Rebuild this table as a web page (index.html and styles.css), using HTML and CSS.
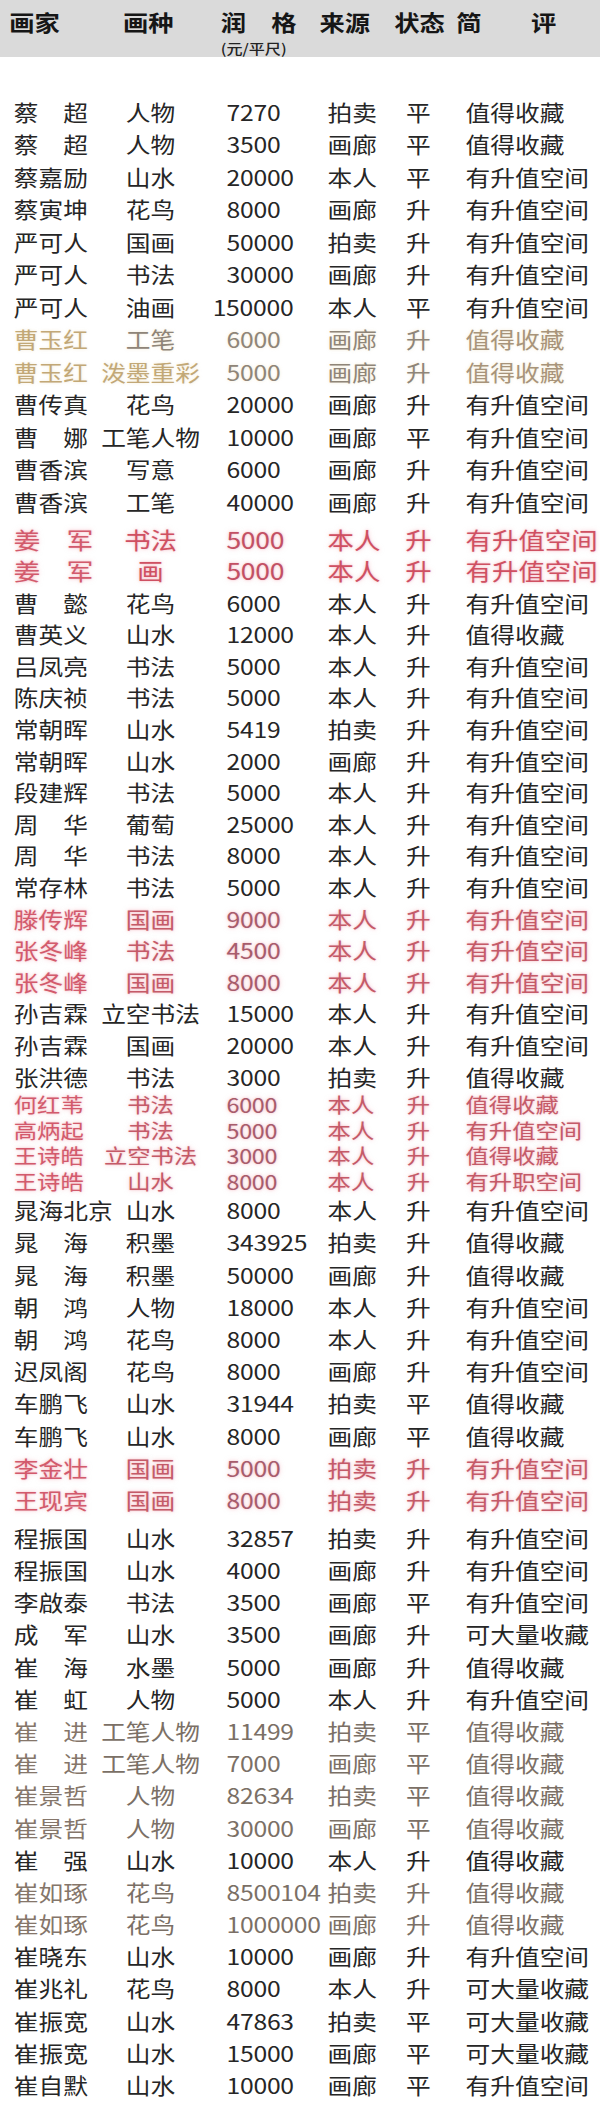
FILE: index.html
```html
<!DOCTYPE html>
<html lang="zh-CN">
<head>
<meta charset="utf-8">
<title>画家润格表</title>
<link rel="stylesheet" href="styles.css">
</head>
<body>
<div class="sheet">
  <div class="head">
    <div class="hc">画家</div>
    <div class="hc">画种</div>
    <div class="hc hprice"><span>润　格</span><span class="unit">(元/平尺)</span></div>
    <div class="hc">来源</div>
    <div class="hc">状态</div>
    <div class="hc">简</div>
    <div class="hc">评</div>
  </div>

  <div class="rows">
    <div class="grp g1">
      <div class="row"><span class="name">蔡　超</span><span class="type">人物</span><span class="price">7270</span><span class="src">拍卖</span><span class="st">平</span><span class="cm">值得收藏</span></div>
      <div class="row"><span class="name">蔡　超</span><span class="type">人物</span><span class="price">3500</span><span class="src">画廊</span><span class="st">平</span><span class="cm">值得收藏</span></div>
      <div class="row"><span class="name">蔡嘉励</span><span class="type">山水</span><span class="price">20000</span><span class="src">本人</span><span class="st">平</span><span class="cm">有升值空间</span></div>
      <div class="row"><span class="name">蔡寅坤</span><span class="type">花鸟</span><span class="price">8000</span><span class="src">画廊</span><span class="st">升</span><span class="cm">有升值空间</span></div>
      <div class="row"><span class="name">严可人</span><span class="type">国画</span><span class="price">50000</span><span class="src">拍卖</span><span class="st">升</span><span class="cm">有升值空间</span></div>
      <div class="row"><span class="name">严可人</span><span class="type">书法</span><span class="price">30000</span><span class="src">画廊</span><span class="st">升</span><span class="cm">有升值空间</span></div>
      <div class="row"><span class="name">严可人</span><span class="type">油画</span><span class="price wide-num">150000</span><span class="src">本人</span><span class="st">平</span><span class="cm">有升值空间</span></div>
      <div class="row gold"><span class="name">曹玉红</span><span class="type">工笔</span><span class="price">6000</span><span class="src">画廊</span><span class="st">升</span><span class="cm">值得收藏</span></div>
      <div class="row gold"><span class="name">曹玉红</span><span class="type tan">泼墨重彩</span><span class="price">5000</span><span class="src">画廊</span><span class="st">升</span><span class="cm">值得收藏</span></div>
      <div class="row"><span class="name">曹传真</span><span class="type">花鸟</span><span class="price">20000</span><span class="src">画廊</span><span class="st">升</span><span class="cm">有升值空间</span></div>
      <div class="row"><span class="name">曹　娜</span><span class="type">工笔人物</span><span class="price">10000</span><span class="src">画廊</span><span class="st">平</span><span class="cm">有升值空间</span></div>
      <div class="row"><span class="name">曹香滨</span><span class="type">写意</span><span class="price">6000</span><span class="src">画廊</span><span class="st">升</span><span class="cm">有升值空间</span></div>
      <div class="row"><span class="name">曹香滨</span><span class="type">工笔</span><span class="price">40000</span><span class="src">画廊</span><span class="st">升</span><span class="cm">有升值空间</span></div>
    </div>

    <div class="grp g2">
      <div class="row red strong"><span class="name">姜　军</span><span class="type">书法</span><span class="price">5000</span><span class="src">本人</span><span class="st">升</span><span class="cm">有升值空间</span></div>
      <div class="row red strong"><span class="name">姜　军</span><span class="type">画</span><span class="price">5000</span><span class="src">本人</span><span class="st">升</span><span class="cm">有升值空间</span></div>
      <div class="row"><span class="name">曹　懿</span><span class="type">花鸟</span><span class="price">6000</span><span class="src">本人</span><span class="st">升</span><span class="cm">有升值空间</span></div>
      <div class="row"><span class="name">曹英义</span><span class="type">山水</span><span class="price">12000</span><span class="src">本人</span><span class="st">升</span><span class="cm">值得收藏</span></div>
      <div class="row"><span class="name">吕凤亮</span><span class="type">书法</span><span class="price">5000</span><span class="src">本人</span><span class="st">升</span><span class="cm">有升值空间</span></div>
      <div class="row"><span class="name">陈庆祯</span><span class="type">书法</span><span class="price">5000</span><span class="src">本人</span><span class="st">升</span><span class="cm">有升值空间</span></div>
      <div class="row"><span class="name">常朝晖</span><span class="type">山水</span><span class="price">5419</span><span class="src">拍卖</span><span class="st">升</span><span class="cm">有升值空间</span></div>
      <div class="row"><span class="name">常朝晖</span><span class="type">山水</span><span class="price">2000</span><span class="src">画廊</span><span class="st">升</span><span class="cm">有升值空间</span></div>
      <div class="row"><span class="name">段建辉</span><span class="type">书法</span><span class="price">5000</span><span class="src">本人</span><span class="st">升</span><span class="cm">有升值空间</span></div>
      <div class="row"><span class="name">周　华</span><span class="type">葡萄</span><span class="price">25000</span><span class="src">本人</span><span class="st">升</span><span class="cm">有升值空间</span></div>
      <div class="row"><span class="name">周　华</span><span class="type">书法</span><span class="price">8000</span><span class="src">本人</span><span class="st">升</span><span class="cm">有升值空间</span></div>
      <div class="row"><span class="name">常存林</span><span class="type">书法</span><span class="price">5000</span><span class="src">本人</span><span class="st">升</span><span class="cm">有升值空间</span></div>
      <div class="row red"><span class="name">滕传辉</span><span class="type">国画</span><span class="price">9000</span><span class="src">本人</span><span class="st">升</span><span class="cm">有升值空间</span></div>
      <div class="row red"><span class="name">张冬峰</span><span class="type">书法</span><span class="price">4500</span><span class="src">本人</span><span class="st">升</span><span class="cm">有升值空间</span></div>
      <div class="row red"><span class="name">张冬峰</span><span class="type">国画</span><span class="price">8000</span><span class="src">本人</span><span class="st">升</span><span class="cm">有升值空间</span></div>
      <div class="row"><span class="name">孙吉霖</span><span class="type">立空书法</span><span class="price">15000</span><span class="src">本人</span><span class="st">升</span><span class="cm">有升值空间</span></div>
      <div class="row"><span class="name">孙吉霖</span><span class="type">国画</span><span class="price">20000</span><span class="src">本人</span><span class="st">升</span><span class="cm">有升值空间</span></div>
      <div class="row"><span class="name">张洪德</span><span class="type">书法</span><span class="price">3000</span><span class="src">拍卖</span><span class="st">升</span><span class="cm">值得收藏</span></div>
    </div>

    <div class="grp g3">
      <div class="row red"><span class="name">何红苇</span><span class="type">书法</span><span class="price">6000</span><span class="src">本人</span><span class="st">升</span><span class="cm">值得收藏</span></div>
      <div class="row red"><span class="name">高炳起</span><span class="type">书法</span><span class="price">5000</span><span class="src">本人</span><span class="st">升</span><span class="cm">有升值空间</span></div>
      <div class="row red"><span class="name">王诗皓</span><span class="type">立空书法</span><span class="price">3000</span><span class="src">本人</span><span class="st">升</span><span class="cm">值得收藏</span></div>
      <div class="row red"><span class="name">王诗皓</span><span class="type">山水</span><span class="price">8000</span><span class="src">本人</span><span class="st">升</span><span class="cm">有升职空间</span></div>
    </div>

    <div class="grp g4">
      <div class="row"><span class="name">晁海北京</span><span class="type">山水</span><span class="price">8000</span><span class="src">本人</span><span class="st">升</span><span class="cm">有升值空间</span></div>
      <div class="row"><span class="name">晁　海</span><span class="type">积墨</span><span class="price">343925</span><span class="src">拍卖</span><span class="st">升</span><span class="cm">值得收藏</span></div>
      <div class="row"><span class="name">晁　海</span><span class="type">积墨</span><span class="price">50000</span><span class="src">画廊</span><span class="st">升</span><span class="cm">值得收藏</span></div>
      <div class="row"><span class="name">朝　鸿</span><span class="type">人物</span><span class="price">18000</span><span class="src">本人</span><span class="st">升</span><span class="cm">有升值空间</span></div>
      <div class="row"><span class="name">朝　鸿</span><span class="type">花鸟</span><span class="price">8000</span><span class="src">本人</span><span class="st">升</span><span class="cm">有升值空间</span></div>
      <div class="row"><span class="name">迟凤阁</span><span class="type">花鸟</span><span class="price">8000</span><span class="src">画廊</span><span class="st">升</span><span class="cm">有升值空间</span></div>
      <div class="row"><span class="name">车鹏飞</span><span class="type">山水</span><span class="price">31944</span><span class="src">拍卖</span><span class="st">平</span><span class="cm">值得收藏</span></div>
      <div class="row"><span class="name">车鹏飞</span><span class="type">山水</span><span class="price">8000</span><span class="src">画廊</span><span class="st">平</span><span class="cm">值得收藏</span></div>
      <div class="row red"><span class="name">李金壮</span><span class="type">国画</span><span class="price">5000</span><span class="src">拍卖</span><span class="st">升</span><span class="cm">有升值空间</span></div>
      <div class="row red"><span class="name">王现宾</span><span class="type">国画</span><span class="price">8000</span><span class="src">拍卖</span><span class="st">升</span><span class="cm">有升值空间</span></div>
    </div>

    <div class="grp g5">
      <div class="row"><span class="name">程振国</span><span class="type">山水</span><span class="price">32857</span><span class="src">拍卖</span><span class="st">升</span><span class="cm">有升值空间</span></div>
      <div class="row"><span class="name">程振国</span><span class="type">山水</span><span class="price">4000</span><span class="src">画廊</span><span class="st">升</span><span class="cm">有升值空间</span></div>
      <div class="row"><span class="name">李啟泰</span><span class="type">书法</span><span class="price">3500</span><span class="src">画廊</span><span class="st">平</span><span class="cm">有升值空间</span></div>
      <div class="row"><span class="name">成　军</span><span class="type">山水</span><span class="price">3500</span><span class="src">画廊</span><span class="st">升</span><span class="cm">可大量收藏</span></div>
      <div class="row"><span class="name">崔　海</span><span class="type">水墨</span><span class="price">5000</span><span class="src">画廊</span><span class="st">升</span><span class="cm">值得收藏</span></div>
      <div class="row"><span class="name">崔　虹</span><span class="type">人物</span><span class="price">5000</span><span class="src">本人</span><span class="st">升</span><span class="cm">有升值空间</span></div>
      <div class="row muted"><span class="name">崔　进</span><span class="type">工笔人物</span><span class="price">11499</span><span class="src">拍卖</span><span class="st">平</span><span class="cm">值得收藏</span></div>
      <div class="row muted"><span class="name">崔　进</span><span class="type">工笔人物</span><span class="price">7000</span><span class="src">画廊</span><span class="st">平</span><span class="cm">值得收藏</span></div>
      <div class="row muted"><span class="name">崔景哲</span><span class="type">人物</span><span class="price">82634</span><span class="src">拍卖</span><span class="st">平</span><span class="cm">值得收藏</span></div>
      <div class="row muted"><span class="name">崔景哲</span><span class="type">人物</span><span class="price">30000</span><span class="src">画廊</span><span class="st">平</span><span class="cm">值得收藏</span></div>
      <div class="row"><span class="name">崔　强</span><span class="type">山水</span><span class="price">10000</span><span class="src">本人</span><span class="st">升</span><span class="cm">值得收藏</span></div>
      <div class="row muted"><span class="name">崔如琢</span><span class="type">花鸟</span><span class="price">8500104</span><span class="src">拍卖</span><span class="st">升</span><span class="cm">值得收藏</span></div>
      <div class="row muted"><span class="name">崔如琢</span><span class="type">花鸟</span><span class="price">1000000</span><span class="src">画廊</span><span class="st">升</span><span class="cm">值得收藏</span></div>
      <div class="row"><span class="name">崔晓东</span><span class="type">山水</span><span class="price">10000</span><span class="src">画廊</span><span class="st">升</span><span class="cm">有升值空间</span></div>
      <div class="row"><span class="name">崔兆礼</span><span class="type">花鸟</span><span class="price">8000</span><span class="src">本人</span><span class="st">升</span><span class="cm">可大量收藏</span></div>
      <div class="row"><span class="name">崔振宽</span><span class="type">山水</span><span class="price">47863</span><span class="src">拍卖</span><span class="st">平</span><span class="cm">可大量收藏</span></div>
      <div class="row"><span class="name">崔振宽</span><span class="type">山水</span><span class="price">15000</span><span class="src">画廊</span><span class="st">平</span><span class="cm">可大量收藏</span></div>
      <div class="row"><span class="name">崔自默</span><span class="type">山水</span><span class="price">10000</span><span class="src">画廊</span><span class="st">平</span><span class="cm">有升值空间</span></div>
    </div>
  </div>
</div>
</body>
</html>
```

FILE: styles.css
```css
html, body {
  margin: 0;
  padding: 0;
  background: #ffffff;
  overflow-x: hidden;
}

body {
  font-family: "Noto Sans CJK SC", "Noto Sans", sans-serif;
  color: #262626;
}

/* The source table is a horizontally stretched picture:
   lay it out at 522px and widen it to the 600px page. */
.sheet {
  width: 522px;
  transform: scaleX(1.1494);
  transform-origin: 0 0;
}

/* ---------- header ---------- */
.head {
  height: 57px;
  box-sizing: border-box;
  background: #dadada;
  display: grid;
  grid-template-columns: 99px 85px 86px 65px 54px 65px 1fr;
  padding: 9px 0 0 8px;
  align-items: start;
}

.hc {
  font-size: 22px;
  font-weight: 700;
  line-height: 24px;
  color: #161616;
  white-space: nowrap;
}

.hprice {
  display: flex;
  flex-direction: column;
}

.unit {
  font-size: 14px;
  font-weight: 500;
  line-height: 16px;
  margin-top: 7px;
  color: #222;
}

/* ---------- rows ---------- */
.rows {
  padding-top: 38.5px;
}

.grp {
  --rh: 32.2px;
}

.g1 { --rh: 32.5px; margin-bottom: 5.5px; }
.g2 { --rh: 31.6px; }
.g3 { --rh: 25.5px; }
.g4 { --rh: 32.2px; margin-bottom: 5.8px; }
.g5 { --rh: 32.2px; }

.row {
  height: var(--rh);
  line-height: var(--rh);
  display: grid;
  grid-template-columns: 76px 86px 111px 58px 42px 1fr;
  padding-left: 12px;
  font-size: 21.5px;
  font-weight: 400;
  white-space: nowrap;
}

.g3 .row {
  font-size: 20.3px;
}

.row > span {
  white-space: nowrap;
}

.type {
  text-align: center;
}

.price {
  padding-left: 23px;
  letter-spacing: -0.2px;
}

.price.wide-num {
  padding-left: 11px;
}

.st {
  text-align: center;
}

.cm {
  padding-left: 20px;
}

/* ---------- colour variants ---------- */
.red {
  color: #c45a68;
  text-shadow: 0 0 2px rgba(236, 140, 156, 0.55), 0 0 5px rgba(244, 175, 186, 0.5);
}

.red .name {
  color: #d25a6c;
}

.red .price {
  color: #a75c6c;
}

.red.strong {
  font-size: 23px;
  color: #cf5062;
}

.red.strong .price {
  color: #c25064;
}

.gold {
  color: #8f8578;
  text-shadow: 0 0 3px rgba(236, 222, 190, 0.7);
}

.gold .name,
.gold .tan {
  color: #c2a877;
}

.gold .cm {
  color: #a8947a;
}

.muted {
  color: #7b7066;
}

.muted .name {
  color: #85766a;
}
```
